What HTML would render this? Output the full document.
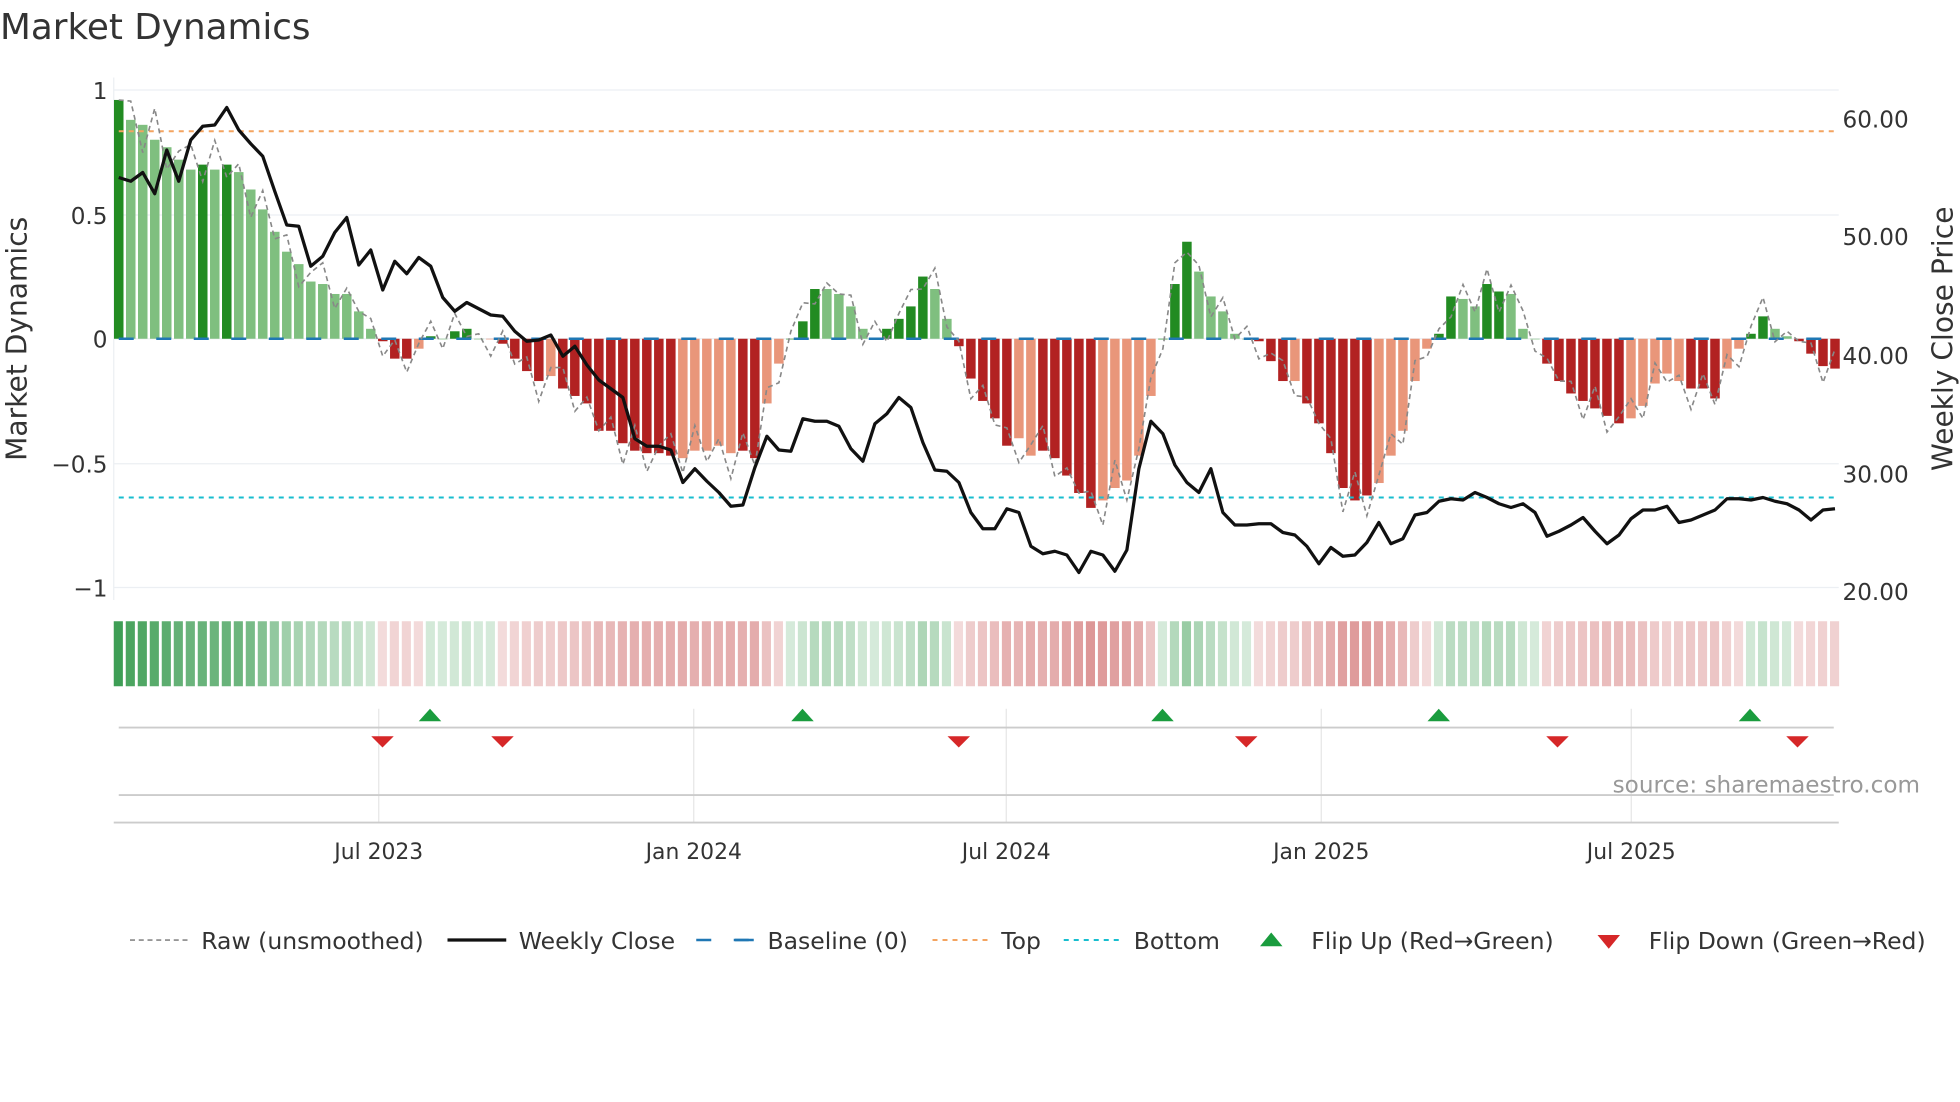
<!DOCTYPE html>
<html><head><meta charset="utf-8"><style>
html,body{margin:0;padding:0;background:#fff;}
svg{display:block;font-family:"DejaVu Sans","Liberation Sans",sans-serif;}
</style></head><body>
<svg id="s" width="1960" height="1102" viewBox="0 0 1568 881.6" xmlns="http://www.w3.org/2000/svg">
<rect width="1568" height="881.6" fill="#fff"/>
<text x="0" y="31" font-size="28.6" fill="#333">Market Dynamics</text>
<g stroke="#eceff3" stroke-width="1">
<line x1="91" y1="72" x2="1471" y2="72"/><line x1="91" y1="172" x2="1471" y2="172"/><line x1="91" y1="271" x2="1471" y2="271"/><line x1="91" y1="371" x2="1471" y2="371"/><line x1="91" y1="470" x2="1471" y2="470"/>
<line x1="91" y1="62" x2="91" y2="480"/>
</g>
<g font-size="18.5" fill="#333" text-anchor="end">
<text x="86" y="79">1</text><text x="86" y="179">0.5</text><text x="86" y="278">0</text><text x="86" y="378">−0.5</text><text x="86" y="477">−1</text>
</g>
<g font-size="18.5" fill="#333">
<text x="1474" y="102">60.00</text><text x="1474" y="196">50.00</text><text x="1474" y="291">40.00</text><text x="1474" y="386">30.00</text><text x="1474" y="480">20.00</text>
</g>
<text transform="translate(21,271) rotate(-90)" font-size="22.5" fill="#333" text-anchor="middle">Market Dynamics</text>
<text transform="translate(1562,271) rotate(-90)" font-size="22.5" fill="#333" text-anchor="middle">Weekly Close Price</text>
<g id="bars"></g>
<g id="heat"></g>
<line x1="95" y1="105" x2="1467" y2="105" stroke="#f4a460" stroke-width="1.6" stroke-dasharray="4,4"/>
<line x1="95" y1="398" x2="1467" y2="398" stroke="#17becf" stroke-width="1.6" stroke-dasharray="4,4"/>
<line x1="95" y1="271" x2="1467" y2="271" stroke="#1f77b4" stroke-width="2" stroke-dasharray="12,18"/>
<polyline id="raw" fill="none" stroke="#888" stroke-width="1.3" stroke-dasharray="4,3"/>
<polyline id="close" fill="none" stroke="#111" stroke-width="2.6" stroke-linejoin="round"/>
<g stroke="#e6e6e6" stroke-width="1">
<line x1="303" y1="567" x2="303" y2="658"/><line x1="555" y1="567" x2="555" y2="658"/><line x1="805" y1="567" x2="805" y2="658"/><line x1="1057" y1="567" x2="1057" y2="658"/><line x1="1305" y1="567" x2="1305" y2="658"/>
</g>
<line x1="95" y1="582" x2="1467" y2="582" stroke="#ccc" stroke-width="1.5"/>
<line x1="95" y1="636" x2="1467" y2="636" stroke="#ccc" stroke-width="1.5"/>
<line x1="91" y1="658" x2="1471" y2="658" stroke="#ccc" stroke-width="1.5"/>
<g fill="#1a9c3e">
<path d="M335 577 L344 567 L353 577Z"/><path d="M633 577 L642 567 L651 577Z"/><path d="M921 577 L930 567 L939 577Z"/><path d="M1142 577 L1151 567 L1160 577Z"/><path d="M1391 577 L1400 567 L1409 577Z"/>
</g>
<g fill="#d62728">
<path d="M297 589 L306 598 L315 589Z"/><path d="M393 589 L402 598 L411 589Z"/><path d="M758 589 L767 598 L776 589Z"/><path d="M988 589 L997 598 L1006 589Z"/><path d="M1237 589 L1246 598 L1255 589Z"/><path d="M1429 589 L1438 598 L1447 589Z"/>
</g>
<text x="1536" y="634" font-size="18.5" fill="#999" text-anchor="end">source: sharemaestro.com</text>
<g font-size="17.5" fill="#333" text-anchor="middle">
<text x="303" y="687">Jul 2023</text><text x="555" y="687">Jan 2024</text><text x="805" y="687">Jul 2024</text><text x="1057" y="687">Jan 2025</text><text x="1305" y="687">Jul 2025</text>
</g>
<g font-size="18.8" fill="#333">
<line x1="104" y1="752" x2="150" y2="752" stroke="#888" stroke-width="1.3" stroke-dasharray="4,3"/>
<text x="161" y="759">Raw (unsmoothed)</text>
<line x1="358" y1="752" x2="405" y2="752" stroke="#111" stroke-width="2.6"/>
<text x="415" y="759">Weekly Close</text>
<line x1="557" y1="752" x2="604" y2="752" stroke="#1f77b4" stroke-width="2" stroke-dasharray="12,18"/>
<line x1="588" y1="752" x2="603" y2="752" stroke="#1f77b4" stroke-width="2"/>
<text x="614" y="759">Baseline (0)</text>
<line x1="746" y1="752" x2="792" y2="752" stroke="#f4a460" stroke-width="1.6" stroke-dasharray="4,4"/>
<text x="801" y="759">Top</text>
<line x1="851" y1="752" x2="897" y2="752" stroke="#17becf" stroke-width="1.6" stroke-dasharray="4,4"/>
<text x="907" y="759">Bottom</text>
<path d="M1008 757 L1017 746 L1026 757Z" fill="#1a9c3e"/>
<text x="1049" y="759">Flip Up (Red→Green)</text>
<path d="M1278 748 L1287 759 L1296 748Z" fill="#d62728"/>
<text x="1319" y="759">Flip Down (Green→Red)</text>
</g>
</svg>
<script>
var B=[[.96,3],[.88,1],[.86,1],[.80,1],[.77,1],[.72,1],[.68,1],[.70,3],[.68,1],[.70,3],[.67,1],[.60,1],[.52,1],[.43,1],[.35,1],[.30,1],[.23,1],[.22,1],[.18,1],[.18,1],[.11,1],[.04,1],[-.01,4],[-.08,4],[-.08,4],[-.04,2],[.01,3],[0,1],[.03,3],[.04,3],[0,1],[0,2],[-.02,4],[-.08,4],[-.13,4],[-.17,4],[-.15,2],[-.2,4],[-.23,4],[-.26,4],[-.37,4],[-.37,4],[-.42,4],[-.45,4],[-.46,4],[-.46,4],[-.47,4],[-.48,2],[-.45,2],[-.45,2],[-.43,2],[-.46,2],[-.45,4],[-.48,4],[-.26,2],[-.1,2],[0,3],[.07,3],[.2,3],[.2,1],[.18,1],[.13,1],[.04,1],[0,1],[.04,3],[.08,3],[.13,3],[.25,3],[.2,1],[.08,1],[-.03,4],[-.16,4],[-.25,4],[-.32,4],[-.43,4],[-.4,2],[-.47,2],[-.45,4],[-.48,4],[-.55,4],[-.62,4],[-.68,4],[-.65,2],[-.6,2],[-.57,2],[-.47,2],[-.23,2],[0,3],[.22,3],[.39,3],[.27,1],[.17,1],[.11,1],[.02,1],[0,1],[-.01,4],[-.09,4],[-.17,4],[-.17,2],[-.26,4],[-.34,4],[-.46,4],[-.6,4],[-.65,4],[-.63,4],[-.58,2],[-.47,2],[-.37,2],[-.17,2],[-.04,2],[.02,3],[.17,3],[.16,1],[.13,1],[.22,3],[.19,3],[.18,1],[.04,1],[0,1],[-.1,4],[-.17,4],[-.22,4],[-.25,4],[-.28,4],[-.31,4],[-.34,4],[-.32,2],[-.27,2],[-.18,2],[-.14,2],[-.17,2],[-.2,4],[-.2,4],[-.24,4],[-.12,2],[-.04,2],[.02,3],[.09,3],[.04,1],[.01,1],[-.01,4],[-.06,4],[-.11,4],[-.12,4]];
var C=[142,145,138,155,120,145,112,101,100,86,104,115,125,153,180,181,213,205,186,174,212,200,232,209,219,206,213,238,249,242,247,252,253,265,273,272,268,285,277,292,304,311,318,351,357,357,360,386,375,385,394,405,404,374,349,360,361,335,337,337,341,359,369,339,331,318,326,354,376,377,386,410,423,423,407,410,437,443,441,444,458,441,444,457,440,375,337,347,372,386,394,375,410,420,420,419,419,426,428,437,451,438,445,444,434,418,435,431,412,410,401,399,400,394,398,403,406,403,410,429,425,420,414,425,435,428,415,408,408,405,418,416,412,408,399,399,400,398,401,403,408,416,408,407];
var col={1:"#7fbf7f",2:"#e9967a",3:"#228b22",4:"#b22222"};
var ns="http://www.w3.org/2000/svg",bars=document.getElementById("bars"),heat=document.getElementById("heat");
var dx=(1468-95)/(B.length-1),rawp=[],cp=[];
var noise=[0,.04,-.06,.07,-.05,.02,.06,-.04,.07,-.03,.02,-.07,.05,-.02,.05,-.07,.03,.07,-.05,.02];
for(var i=0;i<B.length;i++){
 var x=95+i*dx,v=B[i][0],y0=271,y=271-v*199;
 var r=document.createElementNS(ns,"rect");
 r.setAttribute("x",x-3.8);r.setAttribute("width",7.6);
 r.setAttribute("y",Math.min(y,y0));r.setAttribute("height",Math.max(Math.abs(y-y0),0.5));
 r.setAttribute("fill",col[B[i][1]]);bars.appendChild(r);
 var h=document.createElementNS(ns,"rect");
 h.setAttribute("x",x-4);h.setAttribute("width",7.3);h.setAttribute("y",497);h.setAttribute("height",52);
 var a=Math.abs(v);
 if(v>=0){h.setAttribute("fill","rgb(46,150,70)");h.setAttribute("fill-opacity",(0.2+0.75*a).toFixed(2));}
 else{h.setAttribute("fill","rgb(200,85,85)");h.setAttribute("fill-opacity",(0.2+0.6*a).toFixed(2));}
 heat.appendChild(h);
 var rv=v+noise[i%noise.length]*(1+Math.abs(v));
 rawp.push(x.toFixed(1)+","+(271-rv*199).toFixed(1));
 cp.push(x.toFixed(1)+","+C[Math.min(i,C.length-1)]);
}
document.getElementById("raw").setAttribute("points",rawp.join(" "));
document.getElementById("close").setAttribute("points",cp.join(" "));
</script>
</body></html>
